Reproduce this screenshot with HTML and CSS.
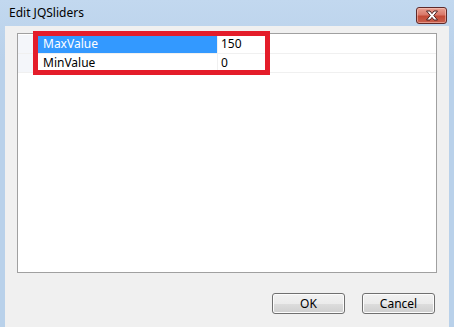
FILE: index.html
```html
<!DOCTYPE html>
<html lang="en">
<head>
    <meta charset="UTF-8">
    <title>Edit JQSliders</title>
    <link rel="stylesheet" href="styles.css">
</head>
<body>
    <div class="window">
        <div class="titlebar">
            <span class="title">Edit JQSliders</span>
            <div class="close-btn">
                <svg width="18" height="11" viewBox="0 0 18 11">
                    <path d="M3.5 1 L7 1 L9 3.6 L11 1 L14.5 1 L10.8 5.5 L14.5 10 L11 10 L9 7.4 L7 10 L3.5 10 L7.2 5.5 Z" fill="#fff" stroke="#4a2020" stroke-width="1" stroke-linejoin="round"/>
                </svg>
            </div>
        </div>
        <div class="client">
            <div class="grid">
                <div class="row">
                    <div class="margin"></div>
                    <div class="name selected">MaxValue</div>
                    <div class="value">150</div>
                </div>
                <div class="row">
                    <div class="margin"></div>
                    <div class="name">MinValue</div>
                    <div class="value">0</div>
                </div>
                <div class="highlight-box"></div>
            </div>
            <div class="buttons">
                <button class="btn">OK</button>
                <button class="btn">Cancel</button>
            </div>
        </div>
    </div>
</body>
</html>
```

FILE: styles.css
```css
* {
    margin: 0;
    padding: 0;
    box-sizing: border-box;
}

body {
    font-family: "Noto Sans", "Open Sans", sans-serif;
    font-size: 12px;
    color: #000;
    background: #b9d1ea;
    width: 454px;
    height: 327px;
    overflow: hidden;
}

.window {
    width: 454px;
    height: 327px;
    background: linear-gradient(to bottom, #c2d8ef 0%, #b9d1ea 60px, #b9d1ea 100%);
    padding: 0 5px;
    display: flex;
    flex-direction: column;
}

.titlebar {
    height: 26px;
    display: flex;
    align-items: center;
    justify-content: space-between;
    flex-shrink: 0;
}

.title {
    margin-left: 4px;
    margin-top: -1px;
}

.close-btn {
    align-self: flex-start;
    width: 31px;
    height: 17px;
    margin-top: 7px;
    margin-right: 2px;
    border: 1px solid #5e2a2a;
    border-radius: 3px;
    background: linear-gradient(to bottom, #e8a192 0%, #d9786a 45%, #c34a36 55%, #c8604e 100%);
    display: flex;
    align-items: center;
    justify-content: center;
    box-shadow: inset 0 0 0 1px rgba(255, 210, 200, 0.5);
}

.close-btn svg {
    display: block;
}

.client {
    flex: 1;
    background: #f0f0f0;
    padding: 7px 12px 0 12px;
    display: flex;
    flex-direction: column;
}

.grid {
    position: relative;
    width: 420px;
    height: 240px;
    border: 1px solid #a0a0a0;
    background: #fff;
    padding-top: 1px;
}

.row {
    display: flex;
    height: 19px;
    border-bottom: 1px solid #f0f0f0;
}

.margin {
    width: 16px;
    background: #f4f6fa;
}

.name {
    width: 184px;
    padding-left: 9px;
    line-height: 18px;
    border-right: 1px solid #f0f0f0;
}

.name.selected {
    background: #3399ff;
    color: #fff;
}

.value {
    flex: 1;
    padding-left: 3px;
    line-height: 18px;
}

.highlight-box {
    position: absolute;
    left: 15px;
    top: -3px;
    width: 237px;
    height: 44px;
    border: 5px solid #e41d2a;
}

.buttons {
    display: flex;
    justify-content: flex-end;
    gap: 17px;
    margin-top: 20px;
    margin-right: 2px;
}

.btn {
    width: 73px;
    height: 21px;
    font-family: inherit;
    font-size: 12px;
    color: #000;
    border: 1px solid #707070;
    border-radius: 3px;
    background: linear-gradient(to bottom, #f2f2f2 0%, #ebebeb 50%, #dddddd 51%, #cfcfcf 100%);
    box-shadow: inset 0 0 0 1px #fcfcfc;
}
```
